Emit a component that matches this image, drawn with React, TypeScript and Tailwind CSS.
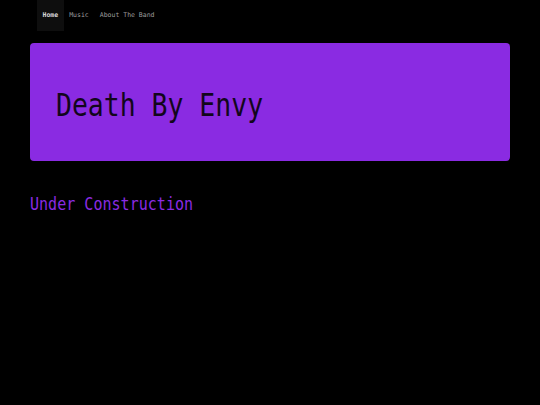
const LINKS = [
  { label: "Home", active: true },
  { label: "Music", active: false },
  { label: "About The Band", active: false },
];

export default function App() {
  return (
    <div className="w-[540px] h-[405px] bg-black font-['DejaVu_Sans_Mono',monospace] overflow-hidden">
      <nav className="flex h-[31px] pl-[37px]">
        {LINKS.map((l) => (
          <a
            key={l.label}
            href="#"
            className={
              l.active
                ? "flex items-center px-[5.5px] bg-[#0e0e0e] text-[#d8d8d8] font-bold text-[6.5px] leading-none"
                : "flex items-center px-[5.5px] text-[#9d9d9d] text-[6.5px] leading-none"
            }
          >
            {l.label}
          </a>
        ))}
      </nav>

      <main className="px-[30px] pt-[12px]">
        <div className="h-[118px] rounded-[4px] bg-[#8a2be2] pl-[26px] pt-[47px]">
          <h1 className="inline-block origin-left scale-x-[0.84] whitespace-nowrap text-[31.5px] leading-none text-[#12061c]">
            Death By Envy
          </h1>
        </div>

        <h2 className="mt-[35px] inline-block origin-left scale-x-[0.86] whitespace-nowrap text-[17.5px] leading-none text-[#8a2be2]">
          Under Construction
        </h2>
      </main>
    </div>
  );
}
